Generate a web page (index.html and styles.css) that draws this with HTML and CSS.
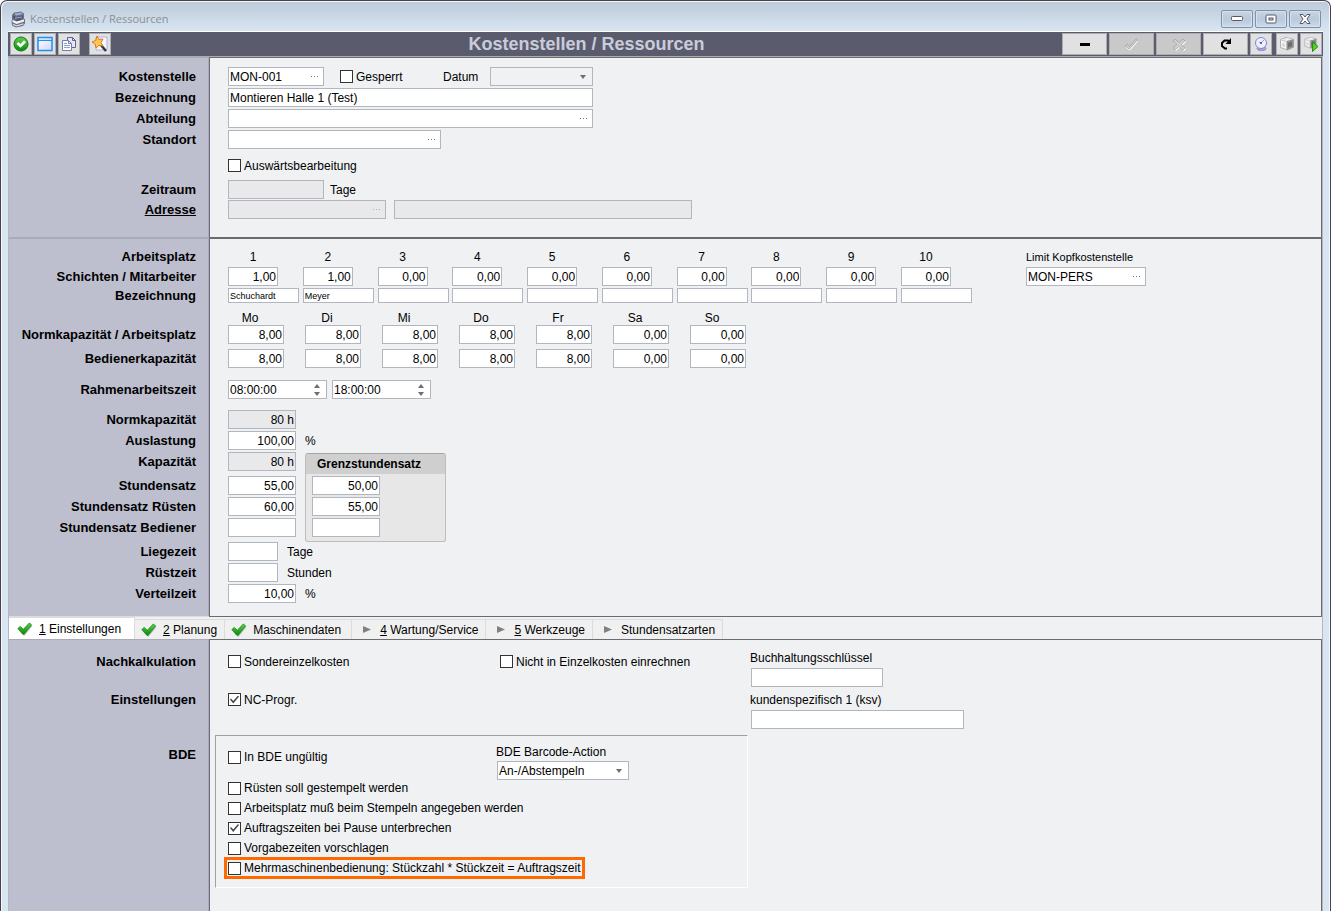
FILE: index.html
```html
<!DOCTYPE html>
<html lang="de">
<head>
<meta charset="utf-8">
<meta name="viewport" content="width=device-width, initial-scale=1">
<title>Kostenstellen / Ressourcen</title>
<link rel="stylesheet" href="styles.css">
</head>
<body>
<svg class="defs" aria-hidden="true">
  <defs>
    <linearGradient id="g-green" x1="0" y1="0" x2="0" y2="1"><stop offset="0" stop-color="#5fd04c"/><stop offset="1" stop-color="#0a8a0a"/></linearGradient>
    <linearGradient id="g-pane" x1="0" y1="0" x2="1" y2="1"><stop offset="0" stop-color="#ffffff"/><stop offset="1" stop-color="#d3d4fa"/></linearGradient>
    <symbol id="dots" viewBox="0 0 8 2"><path d="M0 0h1v1H0zM3 0h1v1H3zM6 0h1v1H6z" fill="#777"/></symbol>
    <symbol id="down" viewBox="0 0 6 4"><path d="M0 0h6L3 4z" fill="#6e6e6e"/></symbol>
    <symbol id="spin" viewBox="0 0 6 12"><path d="M0 4h6L3 0zM0 8h6L3 12z" fill="#6e6e6e"/></symbol>
    <symbol id="tick" viewBox="0 0 16 14"><path d="M1.500 7.500L4 5.200l2.700 2.600L12.500 1.500l2.300 1.700-7.600 9.300H6z" fill="#000" opacity=".25" transform="translate(.6 .9)"/><path d="M.8 6.600L3.200 4.400l3.100 2.900L12.300 1l2.300 1.800-7.500 9.400H5.800z" fill="url(#g-green)" stroke="#168a16" stroke-width=".8"/></symbol>
    <symbol id="play" viewBox="0 0 8 7"><path d="M0 0l8 3.500L0 7z" fill="#808080"/></symbol>
    <symbol id="printer" viewBox="0 0 16 16"><path d="M1.500 3.500L7 1.500l7.500 1.700v8L8.500 14l-7-2.500z" fill="#f4f4f4" stroke="#a2a2a2" stroke-width=".8"/><path d="M7.500 5l7-1.800v8l-6 2.800h-1z" fill="#8e8e8e"/><path d="M9 7l4-1.200v4L9 11.500z" fill="#6c6c6c"/><path d="M2.500 4.200l5 1.300v7.700" fill="none" stroke="#c6c6c6"/><path d="M3 7l3 .8v3.400l-3-1z" fill="#dadada"/><path d="M5 3l3-1 4 1-3.500 1z" fill="#fff" stroke="#ccc" stroke-width=".5"/></symbol>
  </defs>
</svg>
<div class="window">
  <header class="titlebar">
    <svg class="app-icon" viewBox="0 0 16 17" aria-hidden="true"><path d="M4 1.500L11 .5l3 2v5l1 1v4l-2 2.500-7 1.500-4-2-.5-4L2 9V4z" fill="#6f7183"/><path d="M4.500 2.500l6.500-1 2 1.500-7 1.500z" fill="#a3aadb"/><path d="M3 4.500l3 1.500 7-1.500V7L6 8.500 3 7z" fill="#4d4f70"/><path d="M5 6.500l7-1v1l-7 1.300z" fill="#9aa0cc"/><path d="M2.500 9l4 1.500 7.500-2v2L6.500 13l-4-2z" fill="#f6f6f6"/><path d="M6 9l4-.8 1 .8-4 .8z" fill="#3e3f4a"/><path d="M2.500 12.500l4 1.800 7-2v1.200l-7 2-3.500-1.500z" fill="#d9d9dc"/></svg>
    <span class="window-name">Kostenstellen / Ressourcen</span>
    <div class="window-buttons">
      <button type="button" aria-label="Minimieren"><svg width="12" height="6" viewBox="0 0 12 6"><rect x=".5" y=".5" width="11" height="4" rx="1" fill="#fff" stroke="#555a6b"/></svg></button>
      <button type="button" aria-label="Wiederherstellen"><svg width="12" height="10" viewBox="0 0 12 10"><rect x="1" y="1" width="10" height="8" rx="1" fill="#fff" stroke="#555a6b"/><rect x="4" y="4" width="4" height="2" fill="#c8d5e4" stroke="#555a6b"/></svg></button>
      <button type="button" aria-label="Schließen"><svg width="12" height="10" viewBox="0 0 12 10"><path d="M1 .5h3L6 3 8 .5h3L8 5l3 4.500H8L6 7 4 9.500H1L4 5z" fill="#fff" stroke="#555a6b"/></svg></button>
    </div>
  </header>

  <div class="toolbar" role="toolbar" aria-label="Werkzeuge">
    <button class="tool" type="button" aria-label="Übernehmen"><svg width="16" height="16" viewBox="0 0 16 16"><circle cx="8" cy="8" r="7" fill="url(#g-green)" stroke="#13761a"/><path d="M3.500 8l2-2L7.500 8 11 4.300l2 1.900-5.500 5.600z" fill="#fff"/></svg></button>
    <button class="tool" type="button" aria-label="Neu"><svg width="16" height="16" viewBox="0 0 16 16"><rect x="1" y="1.500" width="14" height="13" fill="url(#g-pane)" stroke="#1e90f0" stroke-width="1.500"/><path d="M1 4.500h14" stroke="#1e90f0"/><path d="M2 3h12" stroke="#9fd2ff"/></svg></button>
    <button class="tool" type="button" aria-label="Kopieren"><svg width="16" height="16" viewBox="0 0 16 16"><path d="M6.500 1.500h5l3 3v7h-8z" fill="#e6e4f6" stroke="#675c96"/><path d="M11.500 1.500v3h3" fill="none" stroke="#675c96"/><path d="M1.500 4.500h6l3 3v7h-9z" fill="#fbfbff" stroke="#7383a8"/><path d="M7.500 4.500v3h3" fill="none" stroke="#7383a8"/><path d="M3 7.500h3M3 9.500h6M3 11.500h6" stroke="#8fa3ca"/></svg></button>
    <button class="tool tool-apart" type="button" aria-label="Assistent"><svg width="18" height="18" viewBox="0 0 18 18"><path d="M5 2h11v13H5z" fill="#f4f6ff" stroke="#aab4e0"/><path d="M9 9l6 7" stroke="#333" stroke-width="2.400"/><path d="M6 1l2 3.500 4-.5-2 3.700L12 11l-4-.6L5 13l-.8-4L1 7l3.800-1.500z" fill="#ffc65c" stroke="#e07a18"/></svg></button>
    <h1 class="form-title">Kostenstellen / Ressourcen</h1>
    <button class="tool tool-wide" type="button" aria-label="Löschen"><svg width="10" height="3" viewBox="0 0 10 3"><path d="M0 0h10v3H0z"/></svg></button>
    <button class="tool tool-wide" type="button" aria-label="Speichern" disabled><svg width="15" height="13" viewBox="0 0 15 13"><path d="M1.500 9.500l2-2 2 2.500L12 2l2 1.200-8 9.300z" fill="#fff"/><path d="M1 8l2-2 2.500 2.500L12 1l1.500 1L5.500 11z" fill="#cfcfcf" stroke="#a2a2a2" stroke-width=".8"/></svg></button>
    <button class="tool tool-wide" type="button" aria-label="Abbrechen" disabled><svg width="14" height="13" viewBox="0 0 14 13"><path d="M2 4l2-2 4 3.500L12 2l2 2-4 3.500 4 3.500-2 2-4-3.500L4 13l-2-2 4-3.500z" fill="#fff"/><path d="M1 3l2-2 4 3.500L11 1l2 2-4 3.500 4 3.500-2 2-4-3.500L3 12l-2-2 4-3.500z" fill="#cfcfcf" stroke="#a2a2a2" stroke-width=".8"/></svg></button>
    <button class="tool tool-wide" type="button" aria-label="Aktualisieren"><svg width="12" height="12" viewBox="0 0 12 12"><path d="M7 10.500H5L2 8V5l2.500-2.500H8l2 2" fill="none" stroke="#000" stroke-width="2"/><path d="M11 0v6H5.500z"/></svg></button>
    <button class="tool" type="button" aria-label="Historie"><svg width="16" height="16" viewBox="0 0 16 16"><ellipse cx="8.500" cy="12.500" rx="4.500" ry="2" fill="#a9aad8" stroke="#8788c4"/><circle cx="8" cy="7" r="5.500" fill="#eef0ff" stroke="#8184d0"/><path d="M8 7l3-3M8 7L6 6" stroke="#9a9ce0"/><circle cx="8" cy="7" r="1" fill="#3c3e9c"/></svg></button>
    <button class="tool tool-print" type="button" aria-label="Drucken"><svg width="16" height="16"><use href="#printer"/></svg></button>
    <button class="tool" type="button" aria-label="Druck starten"><svg width="17" height="16" viewBox="0 0 17 16"><use href="#printer" width="15" height="14"/><path d="M9.500 6v9.500l5.500-5z" fill="#52cf2c" stroke="#268c16"/></svg></button>
  </div>

  <form class="form">
    <section class="panel panel-head">
      <div class="rows">
        <div class="row">
          <label class="name" for="ks">Kostenstelle</label>
          <div class="field w-96"><input id="ks" value="MON-001"><button type="button" class="more" aria-label="Kostenstelle wählen"><svg class="dots"><use href="#dots"/></svg></button></div>
          <label class="check locked"><input type="checkbox">Gesperrt</label>
          <label class="date-label" for="dat">Datum</label>
          <div class="field w-103 is-plain"><select id="dat"><option></option></select><svg class="down"><use href="#down"/></svg></div>
        </div>
        <div class="row"><label class="name" for="bez">Bezeichnung</label><input class="field w-365" id="bez" value="Montieren Halle 1 (Test)"></div>
        <div class="row"><label class="name" for="abt">Abteilung</label><div class="field w-365"><input id="abt"><button type="button" class="more" aria-label="Abteilung wählen"><svg class="dots"><use href="#dots"/></svg></button></div></div>
        <div class="row"><label class="name" for="sto">Standort</label><div class="field w-213"><input id="sto"><button type="button" class="more" aria-label="Standort wählen"><svg class="dots"><use href="#dots"/></svg></button></div></div>
      </div>
      <div class="row gap-7"><span class="name"></span><label class="check"><input type="checkbox">Auswärtsbearbeitung</label></div>
      <div class="row gap-5"><label class="name" for="zr">Zeitraum</label><input class="field w-96 is-off" id="zr" disabled><span class="unit unit-near">Tage</span></div>
      <div class="row gap-1"><a class="name" href="#adr">Adresse</a><div class="field w-158 is-off"><input id="adr" aria-label="Adresse" disabled><button type="button" class="more" aria-label="Adresse wählen" disabled><svg class="dots"><use href="#dots"/></svg></button></div><input class="field address-name is-off" aria-label="Adresse Name" disabled></div>
    </section>

    <section class="panel panel-capacity">
      <div class="row">
        <span class="name">Arbeitsplatz</span>
        <div class="places place-heads"><span>1</span><span>2</span><span>3</span><span>4</span><span>5</span><span>6</span><span>7</span><span>8</span><span>9</span><span>10</span></div>
        <label class="limit small" for="limit">Limit Kopfkostenstelle</label>
      </div>
      <div class="row gap-1">
        <span class="name">Schichten / Mitarbeiter</span>
        <div class="places">
          <input class="field num w-50" aria-label="Mitarbeiter 1" value="1,00">
          <input class="field num w-50" aria-label="Mitarbeiter 2" value="1,00">
          <input class="field num w-50" aria-label="Mitarbeiter 3" value="0,00">
          <input class="field num w-50" aria-label="Mitarbeiter 4" value="0,00">
          <input class="field num w-50" aria-label="Mitarbeiter 5" value="0,00">
          <input class="field num w-50" aria-label="Mitarbeiter 6" value="0,00">
          <input class="field num w-50" aria-label="Mitarbeiter 7" value="0,00">
          <input class="field num w-50" aria-label="Mitarbeiter 8" value="0,00">
          <input class="field num w-50" aria-label="Mitarbeiter 9" value="0,00">
          <input class="field num w-50" aria-label="Mitarbeiter 10" value="0,00">
        </div>
        <div class="field limit w-120"><input id="limit" value="MON-PERS"><button type="button" class="more" aria-label="Kopfkostenstelle wählen"><svg class="dots"><use href="#dots"/></svg></button></div>
      </div>
      <div class="row row-low gap-2">
        <span class="name">Bezeichnung</span>
        <div class="places">
          <input class="field low" aria-label="Bezeichnung 1" value="Schuchardt">
          <input class="field low" aria-label="Bezeichnung 2" value="Meyer">
          <input class="field low" aria-label="Bezeichnung 3">
          <input class="field low" aria-label="Bezeichnung 4">
          <input class="field low" aria-label="Bezeichnung 5">
          <input class="field low" aria-label="Bezeichnung 6">
          <input class="field low" aria-label="Bezeichnung 7">
          <input class="field low" aria-label="Bezeichnung 8">
          <input class="field low" aria-label="Bezeichnung 9">
          <input class="field low" aria-label="Bezeichnung 10">
        </div>
      </div>
      <div class="row row-low gap-7"><span class="name"></span><div class="days day-heads"><span>Mo</span><span>Di</span><span>Mi</span><span>Do</span><span>Fr</span><span>Sa</span><span>So</span></div></div>
      <div class="row">
        <span class="name">Normkapazität / Arbeitsplatz</span>
        <div class="days">
          <input class="field num" aria-label="Normkapazität Mo" value="8,00">
          <input class="field num" aria-label="Normkapazität Di" value="8,00">
          <input class="field num" aria-label="Normkapazität Mi" value="8,00">
          <input class="field num" aria-label="Normkapazität Do" value="8,00">
          <input class="field num" aria-label="Normkapazität Fr" value="8,00">
          <input class="field num" aria-label="Normkapazität Sa" value="0,00">
          <input class="field num" aria-label="Normkapazität So" value="0,00">
        </div>
      </div>
      <div class="row gap-5">
        <span class="name">Bedienerkapazität</span>
        <div class="days">
          <input class="field num" aria-label="Bedienerkapazität Mo" value="8,00">
          <input class="field num" aria-label="Bedienerkapazität Di" value="8,00">
          <input class="field num" aria-label="Bedienerkapazität Mi" value="8,00">
          <input class="field num" aria-label="Bedienerkapazität Do" value="8,00">
          <input class="field num" aria-label="Bedienerkapazität Fr" value="8,00">
          <input class="field num" aria-label="Bedienerkapazität Sa" value="0,00">
          <input class="field num" aria-label="Bedienerkapazität So" value="0,00">
        </div>
      </div>
      <div class="row gap-12">
        <label class="name" for="von">Rahmenarbeitszeit</label>
        <div class="times">
          <div class="field w-99"><input id="von" value="08:00:00"><svg class="spin"><use href="#spin"/></svg></div>
          <div class="field w-99"><input aria-label="Rahmenarbeitszeit bis" value="18:00:00"><svg class="spin"><use href="#spin"/></svg></div>
        </div>
      </div>
      <div class="rows gap-11">
        <div class="row"><label class="name" for="nk">Normkapazität</label><input class="field num w-68 is-off" id="nk" value="80 h" readonly></div>
        <div class="row"><label class="name" for="aus">Auslastung</label><input class="field num w-68" id="aus" value="100,00"><span class="unit">%</span></div>
      </div>
      <div class="rates gap-2">
        <div>
          <div class="row"><label class="name" for="kap">Kapazität</label><input class="field num w-68 is-off" id="kap" value="80 h" readonly></div>
          <div class="rows gap-5">
            <div class="row"><label class="name" for="ss">Stundensatz</label><input class="field num w-68" id="ss" value="55,00"></div>
            <div class="row"><label class="name" for="sr">Stundensatz Rüsten</label><input class="field num w-68" id="sr" value="60,00"></div>
            <div class="row"><label class="name" for="sb">Stundensatz Bediener</label><input class="field num w-68" id="sb"></div>
          </div>
        </div>
        <div class="marginal">
          <h2 class="marginal-title">Grenzstundensatz</h2>
          <div class="marginal-body">
            <input class="field num w-68" aria-label="Grenzstundensatz" value="50,00">
            <input class="field num w-68" aria-label="Grenzstundensatz Rüsten" value="55,00">
            <input class="field num w-68" aria-label="Grenzstundensatz Bediener">
          </div>
        </div>
      </div>
      <div class="rows">
        <div class="row"><label class="name" for="lz">Liegezeit</label><input class="field num w-50" id="lz"><span class="unit">Tage</span></div>
        <div class="row"><label class="name" for="rz">Rüstzeit</label><input class="field num w-50" id="rz"><span class="unit">Stunden</span></div>
        <div class="row"><label class="name" for="vz">Verteilzeit</label><input class="field num w-68" id="vz" value="10,00"><span class="unit">%</span></div>
      </div>
    </section>

    <div class="tabs" role="tablist">
      <button type="button" role="tab" aria-selected="true" class="tab tab-done is-active"><svg class="tick"><use href="#tick"/></svg><span><u>1</u> Einstellungen</span></button>
      <button type="button" role="tab" aria-selected="false" class="tab tab-done"><svg class="tick"><use href="#tick"/></svg><span><u>2</u> Planung</span></button>
      <button type="button" role="tab" aria-selected="false" class="tab tab-done tab-roomy"><svg class="tick"><use href="#tick"/></svg><span>Maschinendaten</span></button>
      <button type="button" role="tab" aria-selected="false" class="tab tab-open"><svg class="play"><use href="#play"/></svg><span><u>4</u> Wartung/Service</span></button>
      <button type="button" role="tab" aria-selected="false" class="tab tab-open"><svg class="play"><use href="#play"/></svg><span><u>5</u> Werkzeuge</span></button>
      <button type="button" role="tab" aria-selected="false" class="tab tab-open"><svg class="play"><use href="#play"/></svg><span>Stundensatzarten</span></button>
    </div>

    <section class="panel panel-settings">
      <div class="settings-top">
        <div class="settings-checks">
          <div class="row"><span class="name">Nachkalkulation</span><label class="check check-first"><input type="checkbox">Sondereinzelkosten</label><label class="check"><input type="checkbox">Nicht in Einzelkosten einrechnen</label></div>
          <div class="row"><span class="name">Einstellungen</span><label class="check"><input type="checkbox" checked>NC-Progr.</label></div>
        </div>
        <div class="accounts">
          <label for="bs">Buchhaltungsschlüssel</label>
          <input class="field w-132" id="bs">
          <label class="gap-5" for="ksv">kundenspezifisch 1 (ksv)</label>
          <input class="field w-213" id="ksv">
        </div>
      </div>
      <div class="bde">
        <span class="name bde-name">BDE</span>
        <div class="bde-box">
          <div class="bde-top">
            <label class="check check-invalid"><input type="checkbox">In BDE ungültig</label>
            <div class="barcode">
              <label for="bc">BDE Barcode-Action</label>
              <div class="field w-132"><select id="bc"><option>An-/Abstempeln</option></select><svg class="down"><use href="#down"/></svg></div>
            </div>
          </div>
          <div class="bde-list">
            <label class="check"><input type="checkbox">Rüsten soll gestempelt werden</label>
            <label class="check"><input type="checkbox">Arbeitsplatz muß beim Stempeln angegeben werden</label>
            <label class="check"><input type="checkbox" checked>Auftragszeiten bei Pause unterbrechen</label>
            <label class="check"><input type="checkbox">Vorgabezeiten vorschlagen</label>
            <label class="check marked"><input type="checkbox">Mehrmaschinenbedienung: Stückzahl * Stückzeit = Auftragszeit</label>
          </div>
        </div>
      </div>
    </section>
  </form>
</div>
</body>
</html>
```

FILE: styles.css
```css
:root {
  --side: #bdbece;
  --side-edge: #a9aabb;
  --paper: #eff1f3;
  --line: #6b6c72;
  --field-line: #b2b6be;
}
* { box-sizing: border-box; }
body {
  margin: 0;
  background: #fff;
  color: #000;
  font: 12px/16px "Liberation Sans", Arial, sans-serif;
}
button, input, select { margin: 0; padding: 0; border: 0; color: inherit; font: inherit; }
button { display: flex; align-items: center; justify-content: center; background: none; }
.defs { position: absolute; width: 0; height: 0; }

/* Window frame */
.window {
  display: flex;
  flex-direction: column;
  min-height: 100vh;
  padding: 0 7px;
  border: 1px solid #46434a;
  border-bottom: 0;
  border-radius: 7px 7px 0 0;
  background: linear-gradient(#bccad9, #d9e6f2 31px);
  box-shadow: inset 1px 1px #f2f6fa, inset -1px 0 #f2f6fa;
}
.titlebar { display: flex; align-items: center; height: 30px; padding: 6px 2px 0; }
.app-icon { width: 16px; height: 17px; }
.window-name { margin-left: 4px; color: #8b9095; font: 11px/16px "Open Sans", "Noto Sans", sans-serif; }
.window-buttons { display: flex; gap: 2px; margin-left: auto; }
.window-buttons button {
  width: 32px;
  height: 18px;
  border: 1px solid #7f90ab;
  border-radius: 2px;
  background: linear-gradient(#c8d5e3, #b9c9db 50%, #cddae8);
  box-shadow: inset 0 0 0 1px #d6e1ed;
}

/* Toolbar */
.toolbar {
  display: flex;
  align-items: center;
  gap: 2px;
  height: 26px;
  padding: 0 1px 0 2px;
  border-top: 1px solid #fff;
  border-bottom: 1px solid #ababae;
  background: #5a5c6d;
}
.tool { width: 22px; height: 22px; border: 1px solid #adadad; background: #e1e1e1; }
.tool-apart { margin-left: 7px; }
.tool-print { margin-left: 2px; }
.tool-wide { width: 45px; }
.tool:disabled { background: #c9c9c9; }
.form-title { flex: 1; margin: 0; color: #c9ccda; font-size: 18px; line-height: 22px; text-align: center; }

/* Panels */
.form { display: flex; flex: 1; flex-direction: column; border-left: 1px solid #b5b6c2; border-right: 1px solid #b5b6c2; }
.panel {
  border-right: 1px solid var(--line);
  background:
    linear-gradient(to right, var(--side-edge) 200px, var(--line) 200px) top / 100% 1px no-repeat,
    linear-gradient(to right, var(--side) 199px, var(--side-edge) 199px, var(--side-edge) 200px, var(--line) 200px, var(--line) 201px, var(--paper) 201px);
}
.panel-head { padding: 10px 0 18px; }
.panel-capacity { padding: 10px 0 13px; background-size: 100% 2px, auto; }
.rows { display: flex; flex-direction: column; gap: 2px; }
.row { display: flex; align-items: center; height: 19px; }
.row-low { height: 15px; }
.name { flex: none; width: 187px; margin-right: 32px; color: inherit; font-size: 13px; font-weight: bold; text-align: right; }
.gap-1 { margin-top: 1px; }
.gap-2 { margin-top: 2px; }
.gap-5 { margin-top: 5px; }
.gap-7 { margin-top: 7px; }
.gap-11 { margin-top: 11px; }
.gap-12 { margin-top: 12px; }
.small { font-size: 11px; }

/* Fields */
.field { display: flex; align-items: center; height: 19px; padding: 0 1px; border: 1px solid var(--field-line); background: #fff; }
.field > input, .field > select { flex: 1; min-width: 0; height: 17px; outline: 0; background: none; }
.field > select { appearance: none; opacity: 1; }
.num { text-align: right; }
.is-off { background: #e9e9ec; }
.is-plain { background: var(--paper); }
.more { width: 14px; height: 17px; }
.more:disabled { opacity: .5; }
.dots { width: 8px; height: 2px; }
.down { width: 6px; height: 4px; margin-right: 5px; }
.spin { width: 6px; height: 12px; margin-right: 5px; }
.w-50 { width: 50px; }
.w-68 { width: 68px; }
.w-96 { width: 96px; }
.w-99 { width: 99px; }
.w-103 { width: 103px; }
.w-120 { width: 120px; }
.w-132 { width: 132px; }
.w-158 { width: 158px; }
.w-213 { width: 213px; }
.w-365 { width: 365px; }
.address-name { width: 298px; margin-left: 8px; }
.unit { margin-left: 9px; }
.unit-near { margin-left: 6px; }

/* Check boxes */
.check { display: flex; align-items: center; gap: 3px; white-space: nowrap; }
.check input { display: grid; place-items: center; width: 13px; height: 13px; border: 1px solid #333; background: #fff; appearance: none; }
.check input:checked::after { width: 9px; height: 8px; background: #444; clip-path: polygon(0 50%, 11% 37%, 36% 70%, 89% 0, 100% 12%, 36% 100%); content: ""; }
.locked { width: 103px; margin-left: 16px; }
.date-label { width: 47px; }

/* Work places and week days */
.places { display: grid; grid-template-columns: repeat(10, 71px); justify-content: space-between; width: 744px; }
.place-heads span { width: 50px; text-align: center; }
.low { width: 71px; height: 15px; font-size: 9px; }
.limit { margin-left: 54px; }
.days { display: grid; grid-template-columns: repeat(7, 56px); gap: 21px; }
.days .field { width: 56px; }
.day-heads span { padding-right: 12px; text-align: center; }
.times { display: flex; gap: 5px; }

/* Hourly rates */
.rates { display: flex; align-items: flex-start; }
.marginal { width: 141px; margin: 1px 0 0 9px; border: 1px solid #bdbdbd; border-top-color: #a5a5a5; border-radius: 3px; background: #e7e7e7; }
.marginal-title { margin: 0; padding: 2px 11px; background: #cfcfcf; font-size: 12px; line-height: 16px; }
.marginal-body { display: flex; flex-direction: column; gap: 2px; padding: 2px 6px 4px; }

/* Tabs */
.tabs {
  display: flex;
  align-items: flex-end;
  height: 23px;
  background: linear-gradient(to right, #dcdcdf 200px, var(--line) 200px) top / 100% 1px no-repeat, var(--paper);
}
.tab { height: 20px; padding: 0 7px 0 6px; border: 1px solid #dcdcdc; border-width: 1px 1px 0 0; background: #f0f0f0; white-space: nowrap; }
.tab.is-active { height: 22px; padding: 0 13px 0 8px; background: #fff; }
.tab-done { gap: 6px; }
.tab-roomy { padding-right: 10px; }
.tab-open { gap: 9px; padding-left: 11px; }
.tick { width: 16px; height: 14px; }
.play { width: 8px; height: 7px; }

/* Settings */
.panel-settings { flex: 1; }
.settings-top { display: flex; align-items: flex-start; }
.settings-checks { display: flex; flex-direction: column; gap: 19px; width: 741px; padding-top: 13px; }
.check-first { width: 272px; }
.accounts { display: flex; flex-direction: column; align-items: flex-start; padding-top: 11px; }
.accounts .field { margin: 2px 0 0 1px; }
.bde { display: flex; align-items: flex-start; margin-top: 6px; }
.bde-name { margin: 12px 19px 0 0; }
.bde-box { width: 533px; padding: 8px 12px 11px; border: 1px solid #a0a0a0; border-right-color: #fff; border-bottom-color: #fff; }
.bde-top { display: flex; align-items: flex-start; }
.check-invalid { width: 268px; padding-top: 5px; }
.barcode { display: flex; flex-direction: column; gap: 1px; }
.barcode .field { margin-left: 1px; }
.bde-list { display: flex; flex-direction: column; align-items: flex-start; gap: 4px; }
.marked { margin: -3px -4px; padding: 0 1px; border: 3px solid #ff6a00; }
```
